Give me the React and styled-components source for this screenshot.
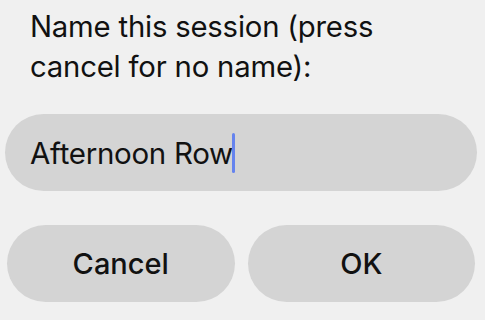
import styled, { createGlobalStyle } from "styled-components";

const GlobalStyle = createGlobalStyle`
  html, body {
    margin: 0;
    padding: 0;
    background: #efefef;
  }
  * {
    box-sizing: border-box;
  }
`;

const Sheet = styled.div`
  width: 485px;
  height: 320px;
  background: #f0f0f0;
  font-family: Inter, "Liberation Sans", sans-serif;
  color: #111;
  display: flex;
  flex-direction: column;
  overflow: hidden;
`;

const Prompt = styled.p`
  margin: 0;
  padding: 7px 30px 0 30px;
  font-size: 29.3px;
  line-height: 40px;
  letter-spacing: -0.2px;
  font-weight: 400;
`;

const Field = styled.div`
  margin: 27px 8px 0 5px;
  height: 77px;
  border-radius: 39px;
  background: #d4d4d4;
  display: flex;
  align-items: center;
  padding-left: 25px;
  font-size: 29.5px;
  letter-spacing: -0.3px;
`;

const Caret = styled.span`
  display: inline-block;
  width: 3px;
  height: 40px;
  margin-left: -1px;
  border-radius: 2px;
  background: #6583ee;
`;

const Actions = styled.div`
  display: grid;
  grid-template-columns: 1fr 1fr;
  gap: 13px;
  margin: 34px 10px 0 7px;
`;

const Button = styled.button`
  height: 77px;
  border: none;
  border-radius: 39px;
  background: #d4d4d4;
  font-family: inherit;
  font-size: 29px;
  font-weight: 500;
  color: #111;
  padding: 0;
  cursor: pointer;
`;

export default function App() {
  return (
    <>
      <GlobalStyle />
      <Sheet>
        <Prompt>
          Name this session (press
          <br />
          cancel for no name):
        </Prompt>
        <Field>
          Afternoon Row
          <Caret />
        </Field>
        <Actions>
          <Button>Cancel</Button>
          <Button>OK</Button>
        </Actions>
      </Sheet>
    </>
  );
}
